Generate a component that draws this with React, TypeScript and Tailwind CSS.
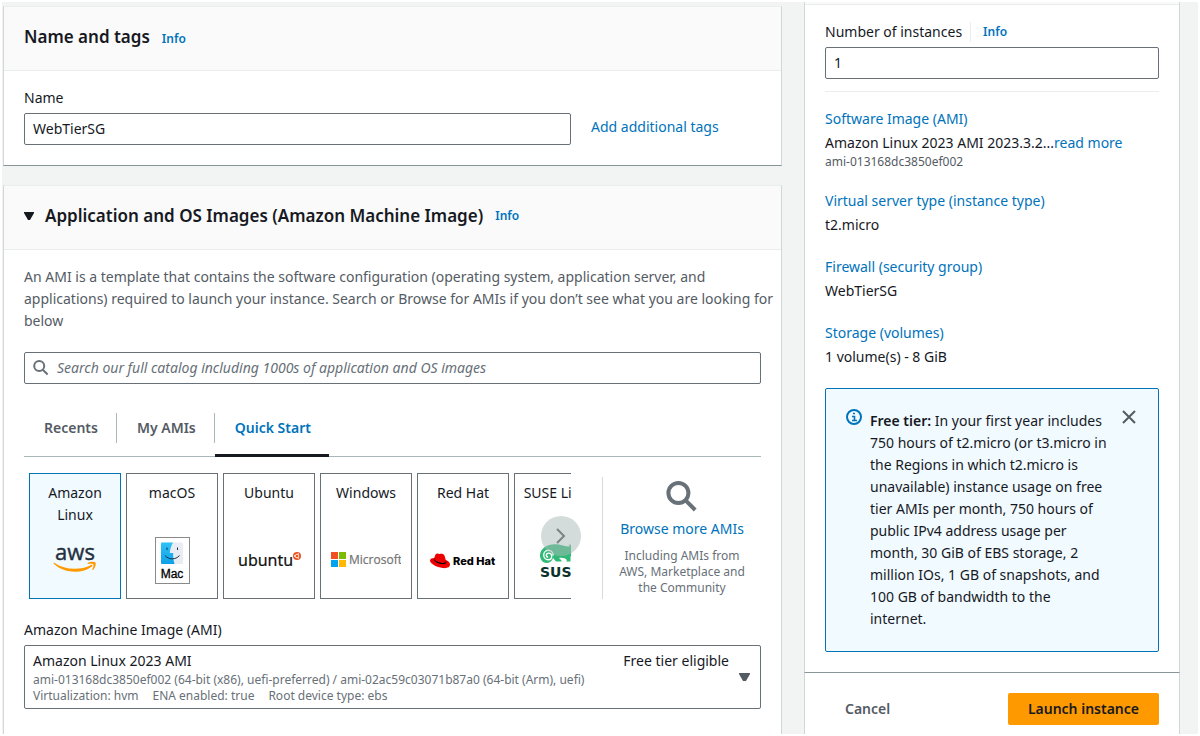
import React, { useState } from "react";

const link = "text-[#0073bb] hover:underline";
const field =
  "block h-8 w-full rounded-xs border border-[#687078] bg-white px-2 pb-[2px] text-sm text-[#16191f] outline-none";

function SearchIcon({ className }: { className: string }) {
  return (
    <svg viewBox="0 0 16 16" fill="none" stroke="#687078" className={className} aria-hidden="true">
      <circle cx="6.2" cy="6" r="5" strokeWidth="2" />
      <path d="M9.8 9.7 14.600 14.500" strokeWidth="2" />
    </svg>
  );
}

function AwsLogo() {
  return (
    <svg width="44" height="32" viewBox="0 0 44 32" role="img" aria-label="AWS">
      <text x="22" y="15" textAnchor="middle" fontSize="22" fontFamily="Open Sans, sans-serif" fill="#232f3e" stroke="#232f3e" strokeWidth="0.4">aws</text>
      <path d="M1.300 17.800C11.500 25 27 25.800 38 20c1.200-.5 2 .6 1 1.400C29.500 29 11.500 28.600 1 19c-.7-.6-.3-1.500.3-1.200z" fill="#ff9900" />
      <path d="M34.600 18c2.200-1.500 6.800-1.800 7.800-.6 1 1.400-.3 5.700-2.400 7.500-.4.3-.9.1-.7-.4.7-1.600 1.600-4.200 1.100-5-.6-.8-3.300-.7-5.300-.6-.7 0-1-.5-.5-.9z" fill="#ff9900" />
    </svg>
  );
}

function MacLogo() {
  return (
    <svg width="36" height="48" viewBox="0 0 36 48" role="img" aria-label="Mac">
      <defs>
        <linearGradient id="finder" x1="0" y1="0" x2="0" y2="1">
          <stop offset="0" stopColor="#2ec3f7" />
          <stop offset="1" stopColor="#0f9fe8" />
        </linearGradient>
      </defs>
      <rect x="1.500" y="0.500" width="34" height="46" fill="#fff" stroke="#8a8a8a" />
      <rect x="7" y="5.500" width="22" height="21.500" rx="1" fill="#e9edf3" />
      <path d="M8 5.500h11c-2 3.500-3 7-3.200 10.500h3.400c-.2 4 .3 7.500 1.300 11H8a1 1 0 0 1-1-1V6.500a1 1 0 0 1 1-1z" fill="url(#finder)" />
      <path d="M13 10.500v2.500M23.500 10.500v2.500" stroke="#16324a" strokeWidth="1" />
      <path d="M11 18.500c4 4.500 10.500 4.500 14.500 0" stroke="#16324a" strokeWidth="1" fill="none" />
      <text x="18" y="41" textAnchor="middle" fontSize="12" fontFamily="Liberation Sans, Arial, sans-serif" fill="#000" stroke="#000" strokeWidth="0.300">Mac</text>
    </svg>
  );
}

function UbuntuLogo() {
  return (
    <svg width="64" height="24" viewBox="0 0 64 24" role="img" aria-label="Ubuntu">
      <text x="1" y="17" fontSize="16" fontFamily="Noto Sans, sans-serif" fill="#111" stroke="#111" strokeWidth="0.200">ubuntu</text>
      <circle cx="60" cy="7" r="4" fill="#e95420" />
      <circle cx="60" cy="7" r="1.800" fill="none" stroke="#fff" strokeWidth="0.800" />
      <circle cx="57.600" cy="7" r="0.700" fill="#fff" />
      <circle cx="61.300" cy="4.900" r="0.700" fill="#fff" />
      <circle cx="61.300" cy="9.100" r="0.700" fill="#fff" />
    </svg>
  );
}

function MicrosoftLogo() {
  return (
    <svg width="70" height="18" viewBox="0 0 70 18" role="img" aria-label="Microsoft">
      <rect x="0" y="0" width="7" height="7" fill="#f25022" />
      <rect x="8" y="0" width="7" height="7" fill="#7fba00" />
      <rect x="0" y="8" width="7" height="7" fill="#00a4ef" />
      <rect x="8" y="8" width="7" height="7" fill="#ffb900" />
      <text x="18" y="12" fontSize="12" fontFamily="Open Sans, sans-serif" fill="#737373" stroke="#737373" strokeWidth="0.200">Microsoft</text>
    </svg>
  );
}

function RedHatLogo() {
  return (
    <svg width="66" height="16" viewBox="0 0 66 16" role="img" aria-label="Red Hat">
      <path d="M5.500 1.500C6.500.2 8 .4 9.500 1c1.500-.7 3.600-.4 4.500.8.800 1.200 1.300 3.700 1.800 5.200 2.400.7 4.200 2.300 4.200 4.600 0 3-3.500 4-7.500 3.400C7 14.200 0 10.800 0 7.500 0 5.800 2 5 4.200 5z" fill="#e00" />
      <path d="M4.200 5.200c-.2.900.5 1.900 2 2.900 2.800 1.800 8.300 2.500 9.500.9l.2-1.600.5 1.600c.3 1.600-1.800 2.300-4.200 2.100C8.500 10.800 4 8.600 3.700 6.500z" fill="#000" />
      <text x="23" y="12" fontSize="11" fontFamily="Inter, sans-serif" fontWeight="800" fill="#000">Red Hat</text>
    </svg>
  );
}

function SuseLogo() {
  return (
    <svg width="40" height="38" viewBox="0 0 40 38" role="img" aria-label="SUSE">
      <path d="M0 13.500C0 6.500 7 2.200 15 2.200c6 0 10 2.300 14.500 2.300V2l4 3c3 1 5 3 6 5-1 2-3 3-6 3-2 0-3 .5-3 2.500v4h-4.500l1-1c-1-2.500-5-3-8-2.500l2.500 2.500v1h-5.500l-3-3.500c-1 3.500-3.500 5-6.500 5C3 21 0 17.500 0 13.500z" fill="#30ba78" />
      <path d="M13.200 13.500c0-3.300-2.200-5.200-4.800-5.200s-4.700 2-4.700 4.700 2 4.700 4.300 4.700 3.700-1.600 3.700-3.500-1.400-3.100-3-3.100-2.400 1-2.400 2.200.9 1.800 1.800 1.700" fill="none" stroke="#fff" strokeWidth="1.400" />
      <text x="0" y="35" fontSize="14" fontFamily="DejaVu Sans, sans-serif" fontWeight="700" fill="#0c322c">SUSE</text>
    </svg>
  );
}

const systems = [
  { name: "Amazon Linux", Logo: AwsLogo },
  { name: "macOS", Logo: MacLogo },
  { name: "Ubuntu", Logo: UbuntuLogo },
  { name: "Windows", Logo: MicrosoftLogo },
  { name: "Red Hat", Logo: RedHatLogo },
  { name: "SUSE Linux", Logo: SuseLogo },
];

const tabs = ["Recents", "My AMIs", "Quick Start"];

const summary = [
  { title: "Virtual server type (instance type)", value: "t2.micro" },
  { title: "Firewall (security group)", value: "WebTierSG" },
  { title: "Storage (volumes)", value: "1 volume(s) - 8 GiB" },
];

const panel = "border border-t-[#eaeded] border-x-[#d1d6d6] border-b-[#879596] bg-white";
const panelHeader = "flex h-16 items-baseline gap-3 border-b border-[#eaeded] bg-[#fafafa] px-5 pt-[19px]";
const panelTitle = "text-[17px] leading-[22px] font-semibold";

function NameCard() {
  return (
    <section className={panel}>
      <header className={panelHeader}>
        <h2 className={panelTitle}>Name and tags</h2>
        <a href="#name-info" className={`${link} text-xs font-semibold`}>Info</a>
      </header>
      <div className="flex items-end px-5 pt-4 pb-5">
        <div className="w-[547px]">
          <label htmlFor="name" className="mb-1 block">Name</label>
          <input id="name" className={field} defaultValue="WebTierSG" />
        </div>
        <a href="#tags" className={`${link} ml-5 pb-[7px]`}>Add additional tags</a>
      </div>
    </section>
  );
}

function ImagesCard() {
  const [tab, setTab] = useState("Quick Start");
  const [system, setSystem] = useState("Amazon Linux");
  return (
    <section className="flex-1 border border-b-0 border-t-[#eaeded] border-x-[#d1d6d6] bg-white">
      <header className={panelHeader}>
        <h2 className={`${panelTitle} flex items-center gap-[11px]`}>
          <svg width="10" height="8" viewBox="0 0 10 8" aria-hidden="true">
            <path d="M0 0h10v1L6 8H4L0 1z" fill="#16191f" />
          </svg>
          Application and OS Images (Amazon Machine Image)
        </h2>
        <a href="#ami-info" className={`${link} text-xs font-semibold`}>Info</a>
      </header>
      <div className="px-5 pt-4">
        <p className="-mr-4 text-[#545b64]">
          An AMI is a template that contains the software configuration (operating system, application server, and
          applications) required to launch your instance. Search or Browse for AMIs if you don’t see what you are looking for
          below
        </p>
        <div className="mt-5 flex h-8 items-center gap-2 rounded-xs border border-[#687078] px-2">
          <SearchIcon className="size-4" />
          <input
            type="search"
            aria-label="Search AMIs"
            placeholder="Search our full catalog including 1000s of application and OS images"
            className="min-w-0 flex-1 text-sm outline-none placeholder:text-[#687078] placeholder:italic"
          />
        </div>
        <div role="tablist" className="mt-4 flex h-[57px] border-b border-[#aab7b8]">
          {tabs.map((t, i) => (
            <button
              key={t}
              role="tab"
              aria-selected={t === tab}
              onClick={() => setTab(t)}
              className={`-mb-px flex border-b-3 pt-[13px] font-semibold ${
                t === tab ? "border-[#16191f] text-[#0073bb]" : "border-transparent text-[#545b64]"
              }`}
            >
              <span className={`flex h-[30px] items-center pr-[18px] pl-5 ${i < 2 ? "border-r border-[#aab7b8]" : ""}`}>{t}</span>
            </button>
          ))}
        </div>
        <div className="mt-4 flex">
          <div className="relative w-[547px]">
            <div className="flex gap-[5px] overflow-hidden pl-[5px]">
              {systems.map(({ name, Logo }) => (
                <button
                  key={name}
                  aria-pressed={name === system}
                  onClick={() => setSystem(name)}
                  className={`flex h-[126px] w-[92px] shrink-0 flex-col items-center border pt-2 ${
                    name === system ? "border-[#0073bb] bg-[#f1faff]" : "border-[#687078] bg-white"
                  }`}
                >
                  <span className={`h-11 ${name === "Amazon Linux" ? "w-16" : "whitespace-nowrap"}`}>{name}</span>
                  <span className="flex h-[70px] items-center"><Logo /></span>
                </button>
              ))}
            </div>
            <button
              aria-label="Next images"
              className="absolute top-[43px] -right-[10px] flex size-10 items-center justify-center rounded-full bg-[#aab7b8]/50"
            >
              <svg width="10" height="16" viewBox="0 0 10 16" fill="none" stroke="#7d8383" strokeWidth="2" aria-hidden="true">
                <path d="M1 1l7 7-7 7" />
              </svg>
            </button>
          </div>
          <div className="mt-1 ml-auto flex h-[122px] w-[159px] flex-col items-center border-l border-[#d5dbdb] pt-1 text-center">
            <SearchIcon className="size-8" />
            <a href="#browse" className={`${link} mt-[5px]`}>Browse more AMIs</a>
            <p className="mt-2 w-32 text-xs text-[#687078]">Including AMIs from AWS, Marketplace and the Community</p>
          </div>
        </div>
        <label htmlFor="ami" className="mt-5 mb-1 block">Amazon Machine Image (AMI)</label>
        <button
          id="ami"
          aria-haspopup="listbox"
          className="flex h-16 w-full items-center rounded-xs border border-[#687078] px-2 text-left"
        >
          <span className="flex-1">
            <span className="flex justify-between">
              <span>Amazon Linux 2023 AMI</span>
              <span>Free tier eligible</span>
            </span>
            <span className="block text-xs text-[#687078]">
              ami-013168dc3850ef002 (64-bit (x86), uefi-preferred) / ami-02ac59c03071b87a0 (64-bit (Arm), uefi)
            </span>
            <span className="flex gap-[14px] text-xs text-[#687078]">
              <span>Virtualization: hvm</span>
              <span>ENA enabled: true</span>
              <span>Root device type: ebs</span>
            </span>
          </span>
          <svg width="11" height="8" viewBox="0 0 11 8" className="mr-[2px] ml-[10px]" aria-hidden="true">
            <path d="M0 0h11v1L7 8H4L0 1z" fill="#545b64" />
          </svg>
        </button>
      </div>
    </section>
  );
}

function Sidebar() {
  const [open, setOpen] = useState(true);
  return (
    <aside className="flex w-[376px] shrink-0 flex-col">
      <div className="border border-t-0 border-x-[#d1d6d6] border-b-[#879596] bg-white">
        <div className="h-[3px] border-b border-[#eaeded] bg-[#fafafa]" />
        <div className="px-5 pt-4 pb-5">
          <div className="mb-1 flex items-center">
            <label htmlFor="count">Number of instances</label>
            <a href="#count-info" className={`${link} ml-2 border-l border-[#eaeded] pl-3 text-xs/5 font-semibold`}>Info</a>
          </div>
          <input id="count" className={field} defaultValue="1" />
          <hr className="mt-3 border-[#eaeded]" />
          <div className="mt-4">
            <a href="#image" className={link}>Software Image (AMI)</a>
            <p className="mt-[2px]">
              Amazon Linux 2023 AMI 2023.3.2...<a href="#more" className={link}>read more</a>
            </p>
            <p className="text-xs text-[#545b64]">ami-013168dc3850ef002</p>
          </div>
          {summary.map((s) => (
            <div key={s.title} className="mt-5">
              <a href="#edit" className={link}>{s.title}</a>
              <p className="mt-[2px]">{s.value}</p>
            </div>
          ))}
          {open && (
            <div className="mt-5 flex h-[264px] rounded-xs border border-[#0073bb] bg-[#f1faff] px-5 pt-5">
              <svg width="16" height="16" viewBox="0 0 16 16" fill="none" stroke="#0073bb" className="shrink-0" aria-hidden="true">
                <circle cx="8" cy="8" r="7" strokeWidth="2" />
                <path d="M6 7.500h2.500v4M6 11.500h5M7 4.500h2" strokeWidth="1.600" />
              </svg>
              <p className="ml-2 w-[238px] shrink-0 pt-[1px]">
                <strong className="font-semibold">Free tier:</strong> In your first year includes 750 hours of t2.micro (or
                t3.micro in the Regions in which t2.micro is unavailable) instance usage on free tier AMIs per month, 750
                hours of public IPv4 address usage per month, 30 GiB of EBS storage, 2 million IOs, 1 GB of snapshots, and
                100 GB of bandwidth to the internet.
              </p>
              <button aria-label="Dismiss" onClick={() => setOpen(false)} className="ml-auto flex h-4 w-[18px] items-center justify-center">
                <svg width="14" height="14" viewBox="0 0 14 14" stroke="#545b64" strokeWidth="2" aria-hidden="true">
                  <path d="M1 1l12 12M13 1 1 13" />
                </svg>
              </button>
            </div>
          )}
        </div>
      </div>
      <div className="flex flex-1 items-start justify-between border-x border-[#d1d6d6] bg-white px-5 pt-5">
        <button className="h-8 px-5 font-semibold text-[#545b64]">Cancel</button>
        <button className="h-8 rounded-xs bg-[#ff9900] px-5 font-semibold text-[#16191f]">Launch instance</button>
      </div>
    </aside>
  );
}

export default function App() {
  return (
    <div className="min-h-screen bg-white p-[2px] font-['Noto_Sans',sans-serif] text-sm leading-[22px] text-[#16191f]">
      <main className="flex min-h-[732px] bg-[#f2f3f3] pr-[18px] pl-px">
        <div className="mr-[22px] flex min-w-0 flex-1 flex-col gap-[19px] pt-1">
          <NameCard />
          <ImagesCard />
        </div>
        <Sidebar />
      </main>
    </div>
  );
}
